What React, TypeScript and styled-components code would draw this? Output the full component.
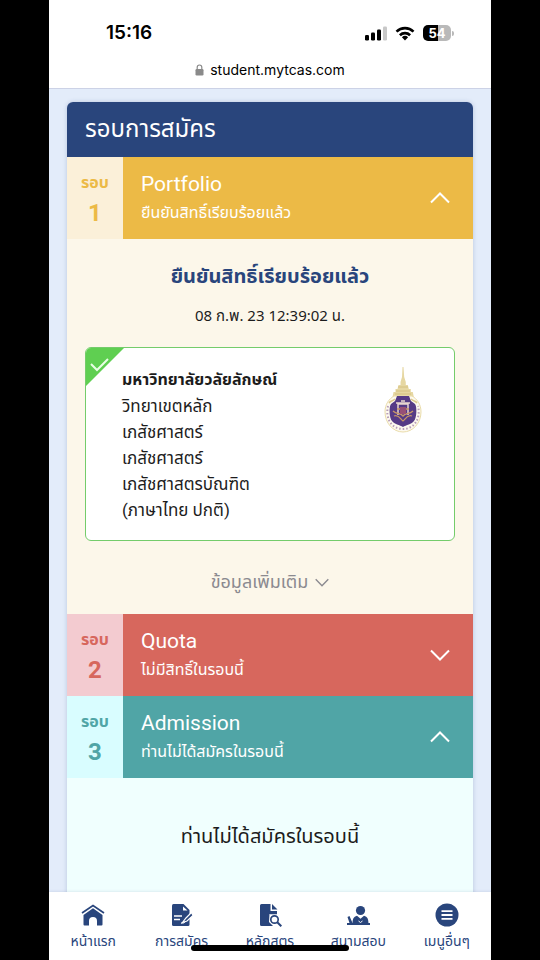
import React, { useState } from 'react';
import styled, { createGlobalStyle } from 'styled-components';

const navy = '#29457c';
const thai = `Roboto, "Noto Sans Thai", "Noto Sans", sans-serif`;

const GlobalStyle = createGlobalStyle`
  *, *::before, *::after { box-sizing: border-box; }
  body { margin: 0; background: #000; font-family: ${thai}; color: #1c1c1c; }
  button { font: inherit; border: 0; margin: 0; cursor: pointer; }
  h1, h2, h3, p { margin: 0; }
`;

const Phone = styled.div`
  display: flex;
  flex-direction: column;
  height: 100vh;
  margin: 0 49px;
  background: #e3ecfa;
  position: relative;
  overflow: hidden;
`;

const BrowserBar = styled.header`
  background: #fff;
  border-bottom: 1px solid #ccd2e6;
  font-family: Inter, sans-serif;
  color: #000;
  flex: none;
`;

const StatusBar = styled.div`
  display: flex;
  align-items: center;
  justify-content: space-between;
  padding: 20px 37px 0 57px;
  height: 46px;
`;

const Clock = styled.time`
  font-size: 19px;
  font-weight: 600;
  line-height: 26px;
`;

const Indicators = styled.div`
  display: flex;
  align-items: center;
  gap: 8px;
`;

const Address = styled.div`
  display: flex;
  align-items: center;
  justify-content: center;
  gap: 6px;
  height: 42px;
  padding-top: 6px;
  font-size: 14px;
  line-height: 20px;
`;

const Main = styled.main`
  flex: 1;
  min-height: 0;
  overflow: hidden;
  padding: 13px 18px 0;
`;

const Card = styled.section`
  border-radius: 6px 6px 0 0;
  overflow: hidden;
  box-shadow: 0 0 4px rgba(60, 80, 140, 0.25);
`;

const CardTitle = styled.h1`
  background: ${navy};
  color: #fff;
  font-size: 24px;
  font-weight: 400;
  line-height: 55px;
  padding: 0 18px;
`;

const RoundButton = styled.button<{ $bg: string }>`
  display: flex;
  align-items: stretch;
  width: 100%;
  height: 82px;
  padding: 0;
  text-align: left;
  color: #fff;
  background: ${p => p.$bg};
`;

const RoundTag = styled.span<{ $bg: string; $fg: string }>`
  display: flex;
  flex-direction: column;
  align-items: center;
  width: 56px;
  padding-top: 12px;
  background: ${p => p.$bg};
  color: ${p => p.$fg};
  font-weight: 700;
`;

const TagWord = styled.span`
  font-size: 16px;
  line-height: 28px;
`;

const TagNumber = styled.span`
  font-size: 24px;
  line-height: 32px;
`;

const RoundText = styled.span`
  display: flex;
  flex-direction: column;
  flex: 1;
  padding: 12px 0 0 18px;
`;

const RoundName = styled.span`
  font-size: 21px;
  line-height: 30px;
`;

const RoundStatus = styled.span`
  font-size: 16px;
  line-height: 28px;
`;

const ChevronBox = styled.span`
  display: flex;
  align-items: center;
  padding-right: 23px;
`;

const Panel = styled.div<{ $bg: string }>`
  background: ${p => p.$bg};
  display: flex;
  flex-direction: column;
  align-items: center;
  padding: 20px 18px 15px;
`;

const Confirmed = styled.h2`
  color: ${navy};
  font-size: 20px;
  font-weight: 700;
  line-height: 34px;
`;

const Stamp = styled.p`
  font-family: "Noto Sans", "Noto Sans Thai", sans-serif;
  font-size: 15px;
  line-height: 24px;
  margin-top: 10px;
`;

const Choice = styled.article`
  position: relative;
  display: flex;
  justify-content: space-between;
  align-items: flex-start;
  width: 100%;
  margin-top: 20px;
  padding: 19px 32px 17px 36px;
  border: 1px solid #74cc6b;
  border-radius: 6px;
  background: #fff;
  overflow: hidden;
`;

const Corner = styled.svg`
  position: absolute;
  left: 0;
  top: 0;
`;

const Details = styled.div`
  font-size: 17px;
  line-height: 26px;
`;

const University = styled.h3`
  font-size: 16px;
  font-weight: 700;
  line-height: 26px;
`;

const More = styled.button`
  display: flex;
  align-items: center;
  gap: 7px;
  margin-top: 24px;
  padding: 0;
  background: none;
  color: #8b8a90;
  font-size: 18px;
  line-height: 34px;
`;

const Empty = styled.p`
  font-size: 20px;
  line-height: 36px;
  padding: 20px 0 60px;
`;

const Nav = styled.nav`
  display: grid;
  grid-template-columns: repeat(5, 1fr);
  flex: none;
  height: 68px;
  background: #fff;
  box-shadow: 0 0 3px rgba(60, 80, 140, 0.2);
`;

const NavLink = styled.a`
  display: flex;
  flex-direction: column;
  align-items: center;
  padding-top: 11px;
  gap: 2px;
  color: ${navy};
  text-decoration: none;
  font-size: 14px;
  line-height: 24px;
  white-space: nowrap;
`;

const HomeIndicator = styled.div`
  position: absolute;
  left: 50%;
  bottom: 9px;
  width: 158px;
  height: 6px;
  margin-left: -79px;
  border-radius: 3px;
  background: #000;
`;

const Signal = () => (
  <svg width="22" height="15" viewBox="0 0 22 15" aria-label="Signal">
    <rect x="0" y="9" width="4" height="5.5" rx="1.2" />
    <rect x="6" y="6.5" width="4" height="8" rx="1.2" />
    <rect x="12" y="3.5" width="4" height="11" rx="1.2" />
    <rect x="18" y="0.5" width="4" height="14" rx="1.2" fill="#c8c8c8" />
  </svg>
);

const Wifi = () => (
  <svg width="20" height="15" viewBox="0 0 20 15" aria-label="Wi-Fi">
    <g fill="none" stroke="#000" strokeWidth="2.6">
      <path d="M1.5 5.6a12.2 12.2 0 0 1 17 0" />
      <path d="M4.9 9.2a7.3 7.3 0 0 1 10.2 0" />
    </g>
    <path d="M10 14.4 6.9 11.3a4.5 4.5 0 0 1 6.2 0z" />
  </svg>
);

const BatteryBody = styled.span`
  display: flex;
  align-items: center;
  justify-content: center;
  width: 28px;
  height: 16px;
  border-radius: 5px;
  background: linear-gradient(90deg, #000 54%, #b9b9b9 54%);
  color: #fff;
  font-size: 13px;
  font-weight: 700;
  line-height: 16px;
`;

const Battery = styled.span`
  display: flex;
  align-items: center;
  gap: 1px;
  &::after {
    content: '';
    width: 2px;
    height: 5px;
    border-radius: 0 2px 2px 0;
    background: #b9b9b9;
  }
`;

const Lock = () => (
  <svg width="9" height="12" viewBox="0 0 9 12" aria-hidden="true">
    <rect x="0.5" y="5" width="8" height="6.5" rx="1.2" fill="#8a8a8a" />
    <path d="M2.2 5.4V3.3a2.3 2.3 0 0 1 4.6 0v2.1" fill="none" stroke="#8a8a8a" strokeWidth="1.2" />
  </svg>
);

const Chevron = ({ up = false, small = false }: { up?: boolean; small?: boolean }) => (
  <svg width={small ? 14 : 20} height={small ? 9 : 12} viewBox="0 0 20 12" fill="none"
    stroke="currentColor" strokeWidth="2" aria-hidden="true">
    <path d={up ? 'M1 10.5 10 1.5l9 9' : 'M1 1.5l9 9 9-9'} />
  </svg>
);

const Crest = () => (
  <svg width="38" height="66" viewBox="0 0 38 66" role="img" aria-label="มหาวิทยาลัยวลัยลักษณ์">
    <path d="M18.5 0h1l.7 10 1.6 5v3h2l1 4h2v3h2l1 5H8.500l1-5h2v-3h2l1-4h2v-3l1.500-5z" fill="#e6d7a2" />
    <path d="M14 20h10M12 24h14M11 27h16" stroke="#d4c080" strokeWidth="1" />
    <path d="M10 29C5 32 1 37 1 45c0 11 8 20 18 20s18-9 18-20c0-8-4-13-9-16z" fill="#fdf9ef" stroke="#e9dcab" />
    <path d="M4 39C1 52 8 62 19 62s18-10 15-23" fill="none" stroke="#b79db8" strokeWidth="2" strokeDasharray="1.500 2" />
    <path d="M13 29h12l2 5 4 3c2 2 2 14-1 17-2 3-8 4-11 6-3-2-9-3-11-6-3-3-3-15-1-17l4-3z" fill="#563b86" />
    <path d="M14 48V37h10v11M12 36h14M17 34h4" fill="none" stroke="#ead7d0" strokeWidth="1.500" />
    <path d="M9 44c4 4 7 1 10 5 3-4 6-1 10-5M10 49c5-2 7 4 9 5 2-1 4-7 9-5M13 42h12" fill="none" stroke="#c69568" strokeWidth="1.300" />
    <path d="M16 40h6v7h-6z" fill="#975076" />
    <path d="M11 32C8 35 7 33 5 36M27 32c3 3 4 1 6 4" fill="none" stroke="#dcc98b" strokeWidth="1.500" />
  </svg>
);

const HomeIcon = () => (
  <svg width="24" height="24" viewBox="0 0 24 24" fill={navy} aria-hidden="true">
    <path d="M1 10 12 2.500 23 10" fill="none" stroke={navy} strokeWidth="1.700" />
    <path d="M12 5.300 21.500 12v9.500a1 1 0 0 1-1 1H16V18a4 4 0 0 0-8 0v4.500H3.500a1 1 0 0 1-1-1V12z" />
  </svg>
);

const ApplyIcon = () => (
  <svg width="24" height="24" viewBox="0 0 24 24" fill={navy} aria-hidden="true">
    <path d="M3.500 1h10l6 6v14.500a1.500 1.500 0 0 1-1.500 1.500H3.500A1.500 1.500 0 0 1 2 21.500v-19A1.500 1.500 0 0 1 3.500 1z" />
    <path d="M13 3.500v4h4.500z" fill="#fff" />
    <path d="M4 13h8M4 16.500h6" stroke="#fff" strokeWidth="1.500" />
    <path d="M21.500 9.500 16 15l-3.500 4.500L17 18l6-5.500z" fill={navy} stroke="#fff" strokeWidth="1.200" />
    <path d="M11 20q3 .5 4-1" stroke="#fff" fill="none" />
  </svg>
);

const CourseIcon = () => (
  <svg width="24" height="24" viewBox="0 0 24 24" fill={navy} aria-hidden="true">
    <path d="M3.500 1h9v7H19v14a1 1 0 0 1-1 1H3.500A1.500 1.500 0 0 1 2 21.500v-19A1.500 1.500 0 0 1 3.500 1zM14 1l5.500 5.500H14z" />
    <path d="M11.500 11H21v13h-5l-5-5z" fill="#fff" />
    <path d="M12 10.500h7" stroke={navy} strokeWidth="1.500" />
    <circle cx="16.500" cy="16.500" r="3.700" fill="#fff" stroke={navy} strokeWidth="1.700" />
    <path d="m19.300 19.300 4 4" stroke={navy} strokeWidth="2" />
  </svg>
);

const ExamIcon = () => (
  <svg width="24" height="24" viewBox="0 0 24 24" fill={navy} aria-hidden="true">
    <circle cx="14.500" cy="7.500" r="4.600" />
    <path d="M6.500 21c0-5 1-7.500 4.500-8.300l3.500 3 3.500-3c3.500.8 4.500 3.300 4.500 8.300z" />
    <path d="m12.500 18 2 1.500 2-1.500" fill="none" stroke="#fff" strokeWidth="1" />
    <path d="M1 20h23v2H1zM1.500 14l2-1 3 7H3.500z" />
  </svg>
);

const MenuIcon = () => (
  <svg width="24" height="24" viewBox="0 0 24 24" aria-hidden="true">
    <circle cx="12" cy="12" r="11.500" fill={navy} />
    <path d="M6.500 8.200h11M6.500 12h11M6.500 15.800h11" stroke="#fff" strokeWidth="1.800" />
  </svg>
);

interface RoundProps {
  no: number; name: string; status: string; bg: string; tagBg: string; tagFg: string;
  initiallyOpen?: boolean; children?: React.ReactNode;
}

const Round = ({ no, name, status, bg, tagBg, tagFg, initiallyOpen = false, children }: RoundProps) => {
  const [open, setOpen] = useState(initiallyOpen);
  return (
    <>
      <RoundButton $bg={bg} aria-expanded={open} onClick={() => setOpen(!open)}>
        <RoundTag $bg={tagBg} $fg={tagFg}>
          <TagWord>รอบ</TagWord>
          <TagNumber>{no}</TagNumber>
        </RoundTag>
        <RoundText>
          <RoundName>{name}</RoundName>
          <RoundStatus>{status}</RoundStatus>
        </RoundText>
        <ChevronBox><Chevron up={open} /></ChevronBox>
      </RoundButton>
      {open && children}
    </>
  );
};

const navItems = [
  { label: 'หน้าแรก', Icon: HomeIcon },
  { label: 'การสมัคร', Icon: ApplyIcon },
  { label: 'หลักสูตร', Icon: CourseIcon },
  { label: 'สนามสอบ', Icon: ExamIcon },
  { label: 'เมนูอื่นๆ', Icon: MenuIcon },
];

export default function App() {
  return (
    <>
      <GlobalStyle />
      <Phone>
        <BrowserBar>
          <StatusBar>
            <Clock>15:16</Clock>
            <Indicators>
              <Signal />
              <Wifi />
              <Battery><BatteryBody>54</BatteryBody></Battery>
            </Indicators>
          </StatusBar>
          <Address><Lock />student.mytcas.com</Address>
        </BrowserBar>
        <Main>
          <Card>
            <CardTitle>รอบการสมัคร</CardTitle>
            <Round no={1} name="Portfolio" status="ยืนยันสิทธิ์เรียบร้อยแล้ว"
              bg="#ecba46" tagBg="#fbf0d9" tagFg="#ecba46" initiallyOpen>
              <Panel $bg="#fcf7ea">
                <Confirmed>ยืนยันสิทธิ์เรียบร้อยแล้ว</Confirmed>
                <Stamp>08 ก.พ. 23 12:39:02 น.</Stamp>
                <Choice>
                  <Corner width="38" height="38" viewBox="0 0 38 38" aria-hidden="true">
                    <path d="M0 0h38L0 38z" fill="#5fcf51" />
                    <path d="m5 16 6 6 11-11" fill="none" stroke="#e9ffe5" strokeWidth="2" />
                  </Corner>
                  <Details>
                    <University>มหาวิทยาลัยวลัยลักษณ์</University>
                    <p>วิทยาเขตหลัก</p>
                    <p>เภสัชศาสตร์</p>
                    <p>เภสัชศาสตร์</p>
                    <p>เภสัชศาสตรบัณฑิต</p>
                    <p>(ภาษาไทย ปกติ)</p>
                  </Details>
                  <Crest />
                </Choice>
                <More>ข้อมูลเพิ่มเติม<Chevron small /></More>
              </Panel>
            </Round>
            <Round no={2} name="Quota" status="ไม่มีสิทธิ์ในรอบนี้"
              bg="#d7675d" tagBg="#f3cbd0" tagFg="#d7675d" />
            <Round no={3} name="Admission" status="ท่านไม่ได้สมัครในรอบนี้"
              bg="#50a5a6" tagBg="#d9fdff" tagFg="#50a5a6" initiallyOpen>
              <Panel $bg="#f0fffe">
                <Empty>ท่านไม่ได้สมัครในรอบนี้</Empty>
              </Panel>
            </Round>
          </Card>
        </Main>
        <Nav aria-label="เมนูหลัก">
          {navItems.map(({ label, Icon }) => (
            <NavLink href="#" key={label}><Icon />{label}</NavLink>
          ))}
        </Nav>
        <HomeIndicator />
      </Phone>
    </>
  );
}
